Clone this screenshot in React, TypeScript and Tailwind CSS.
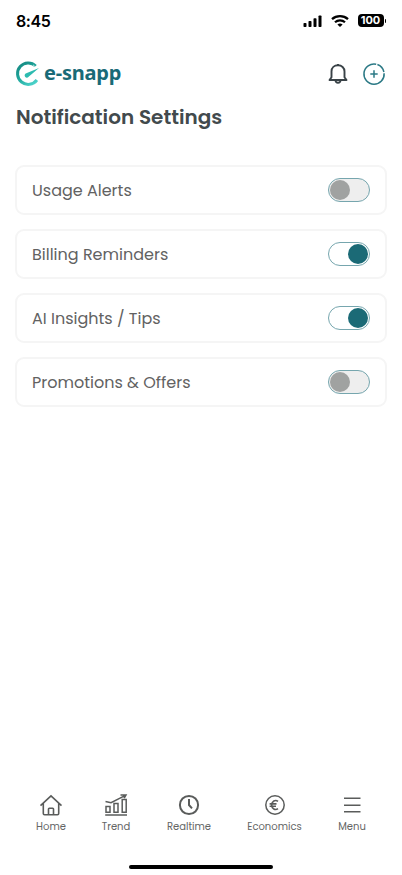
import { useState, type ReactNode } from "react";

function StatusBar() {
  return (
    <div className="flex h-11 items-center justify-between pb-[3px] pl-4 pr-[16px] font-['Inter',sans-serif]">
      <span className="text-[16px] font-semibold leading-5 tracking-[-0.4px] text-black">8:45</span>
      <div className="flex h-5 items-center">
        <svg width="19" height="12" viewBox="0 0 19 12" fill="#000">
          <rect x="0.500" y="8" width="3" height="4" rx="0.8" />
          <rect x="5.500" y="6" width="3" height="6" rx="0.8" />
          <rect x="10.500" y="3.200" width="3" height="8.800" rx="0.8" />
          <rect x="15.500" y="0.500" width="3" height="11.500" rx="0.8" />
        </svg>
        <svg className="ml-[9px]" width="18" height="12" viewBox="0 0 18 12" fill="none" stroke="#000">
          <path d="M1 4.2C5.500.2 12.500.2 17 4.200" strokeWidth="2.300" />
          <path d="M4 7.300C6.800 4.700 11.200 4.700 14 7.300" strokeWidth="2.200" />
          <path d="M6.400 9.400C7.900 8.100 10.100 8.100 11.600 9.400L9 12Z" fill="#000" stroke="none" />
        </svg>
        <div className="ml-[9px] flex h-[13px] w-[26px] items-center justify-center rounded-[4px] bg-black text-[11px] font-bold leading-[13px] text-white">
          100
        </div>
        <div className="ml-px h-1 w-[1.5px] rounded-r bg-black" />
      </div>
    </div>
  );
}

function Logo() {
  return (
    <div className="flex items-center">
      <svg width="25" height="26" viewBox="0 0 25 26" fill="none">
        <defs>
          <linearGradient id="ring" x1="3" y1="2" x2="19" y2="24" gradientUnits="userSpaceOnUse">
            <stop stopColor="#14867f" />
            <stop offset="0.5" stopColor="#20a89d" />
            <stop offset="1" stopColor="#4fd5cd" />
          </linearGradient>
        </defs>
        <path d="M20.700 5A10.700 10.700 0 1 0 21.900 19" stroke="url(#ring)" strokeWidth="3" />
        <path d="M24 7L13.900 15.600A2.300 2.300 0 1 1 11.300 12.200Z" fill="#2dbbb0" />
        <path d="M18 3.800l3 2.800" stroke="#fff" strokeWidth="0.700" />
      </svg>
      <span className="-mt-0.5 ml-1 font-['Noto_Sans',sans-serif] text-[20px] font-bold leading-6 tracking-[-0.2px] text-[#196a77]">
        e-snapp
      </span>
    </div>
  );
}

function Header() {
  return (
    <header className="flex h-[60px] items-center justify-between pl-[15px] pr-4">
      <Logo />
      <div className="flex items-center gap-[14px]">
        <svg width="20" height="22" viewBox="0 0 20 22" fill="none" stroke="#394247" strokeWidth="1.900" strokeLinejoin="round">
          <path d="M1.500 17H18.500L16.500 14.300V8.500C16.500 4.600 13.700 2.300 10 2.300S3.500 4.600 3.500 8.500V14.300Z" />
          <path d="M10 2.300V1M7.500 17.500C7.700 20.500 12.300 20.500 12.500 17.500" />
        </svg>
        <svg width="24" height="24" viewBox="0 0 24 24" fill="none" stroke="#2b7985" strokeWidth="1.500">
          <path d="M14.200 2.200A10.100 10.100 0 1 0 22.100 11.200M15.400 2.500A10.100 10.100 0 0 1 21.900 10" />
          <path d="M12 8.300V15.700M8.300 12H15.700" />
        </svg>
      </div>
    </header>
  );
}

function Toggle({ on, label, onChange }: { on: boolean; label: string; onChange: () => void }) {
  return (
    <button
      role="switch"
      aria-checked={on}
      aria-label={label}
      onClick={onChange}
      className={`flex h-6 w-[42px] items-center rounded-full border border-[#76a6ae] px-px ${on ? "justify-end bg-white" : "justify-start bg-[#eeeeee]"}`}
    >
      <span className={`size-5 rounded-full ${on ? "bg-[#1b6a76]" : "bg-[#a0a2a1]"}`} />
    </button>
  );
}

const initialSettings = [
  { label: "Usage Alerts", on: false },
  { label: "Billing Reminders", on: true },
  { label: "AI Insights / Tips", on: true },
  { label: "Promotions & Offers", on: false },
];

function NavItem({ label, width, children }: { label: string; width: string; children: ReactNode }) {
  return (
    <a className={`flex flex-col items-center ${width}`}>
      <svg width="24" height="24" viewBox="0 0 24 24" fill="none" stroke="#5a5c5b" strokeWidth="1.600">
        {children}
      </svg>
      <span className="mt-0.5 whitespace-nowrap text-[10px] leading-4 text-[#646665]">{label}</span>
    </a>
  );
}

export default function App() {
  const [settings, setSettings] = useState(initialSettings);
  const toggle = (index: number) =>
    setSettings((rows) => rows.map((row, i) => (i === index ? { ...row, on: !row.on } : row)));

  return (
    <div className="flex h-[875px] w-[402px] flex-col overflow-hidden bg-white font-['Poppins','Inter',sans-serif]">
      <StatusBar />
      <Header />
      <h1 className="h-[61px] pl-4 text-[20px] font-semibold leading-[27px] text-[#424a4d]">Notification Settings</h1>
      <main className="flex flex-1 flex-col gap-3.5 px-[15px]">
        {settings.map((row, i) => (
          <div key={row.label} className="flex h-[50px] w-[372px] items-center justify-between rounded-[9px] border-2 border-[#f5f5f5] px-[15px]">
            <span className="pt-0.5 text-[16px] leading-6 text-[#626262]">{row.label}</span>
            <Toggle on={row.on} label={row.label} onChange={() => toggle(i)} />
          </div>
        ))}
      </main>
      <nav className="flex h-[60px] pl-[35px]">
        <NavItem label="Home" width="w-8">
          <path d="M1.500 12.700L12 2.800L22.500 12.700M4.300 10.500V20.500Q4.300 21.700 5.500 21.700H18.500Q19.700 21.700 19.700 20.500V10.500M9.500 21.500V16Q9.500 15.200 10.300 15.200H13.700Q14.500 15.200 14.500 16V21.500" />
        </NavItem>
        <NavItem label="Trend" width="ml-[33px] w-8">
          <path d="M1.200 22H23M2 13.500H6V19.300H2ZM10 10.500H14V19.300H10ZM18.200 6.500H22.200V19.300H18.200ZM1.500 8.500L7 9.700L21 2.600M16.500 1.900H22L20.200 5" strokeWidth="1.500" />
        </NavItem>
        <NavItem label="Realtime" width="ml-[35px] w-11">
          <circle cx="12" cy="12" r="9.100" strokeWidth="2" />
          <path d="M12 6V12L15 15.300" strokeWidth="2" />
        </NavItem>
        <NavItem label="Economics" width="ml-9 w-[55px]">
          <circle cx="12" cy="12" r="9.200" strokeWidth="1.500" />
          <path d="M15 8.300C12.300 6.400 8.700 8 8.700 12S12.300 17.600 15 15.700M6.600 10.900H13.500M6.600 13.200H13" />
        </NavItem>
        <NavItem label="Menu" width="ml-9 w-7">
          <path d="M4 5.300H20.500M4 12.300H20.500M4 18.700H20.500" />
        </NavItem>
      </nav>
      <div className="flex h-[22px] items-start justify-center">
        <div className="mt-[12px] h-1 w-[144px] rounded-full bg-black" />
      </div>
    </div>
  );
}
